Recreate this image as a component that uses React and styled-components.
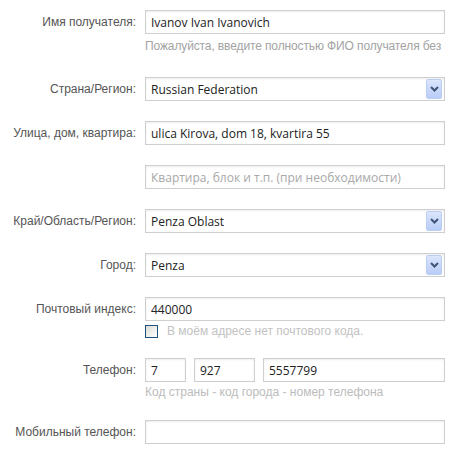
import React from "react";
import styled, { createGlobalStyle } from "styled-components";

const GlobalStyle = createGlobalStyle`
  html, body {
    margin: 0;
    padding: 0;
    background: #fff;
  }
  body {
    font-family: "Liberation Sans", Arial, sans-serif;
  }
`;

function Chevron() {
  return (
    <svg width="9" height="6" viewBox="0 0 9 6">
      <path d="M1 1 L4.5 4.5 L8 1" fill="none" stroke="#3f5378" strokeWidth="2" />
    </svg>
  );
}

function SelectField({ value }) {
  return (
    <SelectBox>
      <Value>{value}</Value>
      <ArrowButton>
        <Chevron />
      </ArrowButton>
    </SelectBox>
  );
}

function App() {
  return (
    <>
      <GlobalStyle />
      <Form>
        <Row $space={23}>
          <Label>Имя получателя:</Label>
          <Field>
            <TextInput defaultValue="Ivanov Ivan Ivanovich" />
            <Hint $tight>Пожалуйста, введите полностью ФИО получателя без</Hint>
          </Field>
        </Row>

        <Row>
          <Label>Страна/Регион:</Label>
          <Field>
            <SelectField value="Russian Federation" />
          </Field>
        </Row>

        <Row>
          <Label>Улица, дом, квартира:</Label>
          <Field>
            <TextInput defaultValue="ulica Kirova, dom 18, kvartira 55" />
          </Field>
        </Row>

        <Row>
          <Label />
          <Field>
            <TextInput placeholder="Квартира, блок и т.п. (при необходимости)" />
          </Field>
        </Row>

        <Row>
          <Label>Край/Область/Регион:</Label>
          <Field>
            <SelectField value="Penza Oblast" />
          </Field>
        </Row>

        <Row>
          <Label>Город:</Label>
          <Field>
            <SelectField value="Penza" />
          </Field>
        </Row>

        <Row>
          <Label>Почтовый индекс:</Label>
          <Field>
            <TextInput defaultValue="440000" />
            <CheckRow>
              <CheckBox />
              <CheckText>В моём адресе нет почтового кода.</CheckText>
            </CheckRow>
          </Field>
        </Row>

        <Row>
          <Label>Телефон:</Label>
          <Field>
            <PhoneGroup>
              <TextInput defaultValue="7" />
              <TextInput defaultValue="927" />
              <TextInput defaultValue="5557799" />
            </PhoneGroup>
            <Hint $light $top={2}>Код страны - код города - номер телефона</Hint>
          </Field>
        </Row>

        <Row>
          <Label>Мобильный телефон:</Label>
          <Field>
            <TextInput />
          </Field>
        </Row>
      </Form>
    </>
  );
}

const Form = styled.form`
  width: 454px;
  padding-top: 10px;
`;

const Row = styled.div`
  display: grid;
  grid-template-columns: 136px 300px;
  column-gap: 9px;
  margin-bottom: ${(p) => p.$space ?? 20}px;
`;

const Label = styled.label`
  text-align: right;
  font-size: 12px;
  line-height: 24px;
  color: #555;
  white-space: nowrap;
`;

const Field = styled.div`
  display: flex;
  flex-direction: column;
  min-width: 0;
`;

const TextInput = styled.input`
  box-sizing: border-box;
  width: 100%;
  height: 24px;
  margin: 0;
  padding: 0 5px;
  border: 1px solid #cfcfcf;
  box-shadow: inset 0 1px 2px rgba(0, 0, 0, 0.08);
  font-family: "Open Sans", "Noto Sans", sans-serif;
  font-size: 12px;
  color: #222;
  background: #fff;
  outline: none;

  &::placeholder {
    color: #a8a8a8;
  }
`;

const Hint = styled.div`
  margin-top: ${(p) => p.$top ?? 4}px;
  font-size: 12px;
  line-height: 16px;
  letter-spacing: ${(p) => (p.$tight ? "-0.12px" : "0")};
  color: ${(p) => (p.$light ? "#bcbcbc" : "#a3a3a3")};
  white-space: nowrap;
`;

const SelectBox = styled.div`
  box-sizing: border-box;
  height: 24px;
  display: flex;
  align-items: center;
  padding: 0 2px 0 5px;
  border: 1px solid #cfcfcf;
  box-shadow: inset 0 1px 2px rgba(0, 0, 0, 0.08);
  background: #fff;
`;

const Value = styled.span`
  flex: 1;
  font-family: "Open Sans", "Noto Sans", sans-serif;
  font-size: 12px;
  color: #222;
`;

const ArrowButton = styled.span`
  box-sizing: border-box;
  width: 16px;
  height: 20px;
  display: flex;
  align-items: center;
  justify-content: center;
  border: 1px solid #bccdf3;
  border-radius: 2px;
  background: linear-gradient(#dbe5fc, #b9cdf7);
`;

const CheckRow = styled.div`
  display: flex;
  align-items: center;
  gap: 9px;
  margin-top: 3px;
  height: 14px;
`;

const CheckBox = styled.span`
  box-sizing: border-box;
  width: 13px;
  height: 13px;
  border: 1px solid #1c5180;
  background: linear-gradient(135deg, #dcdcd6, #ffffff);
`;

const CheckText = styled.span`
  font-size: 12px;
  color: #c2c2c2;
`;

const PhoneGroup = styled.div`
  display: grid;
  grid-template-columns: 41px 61px 1fr;
  column-gap: 8px;
`;

export default App;
